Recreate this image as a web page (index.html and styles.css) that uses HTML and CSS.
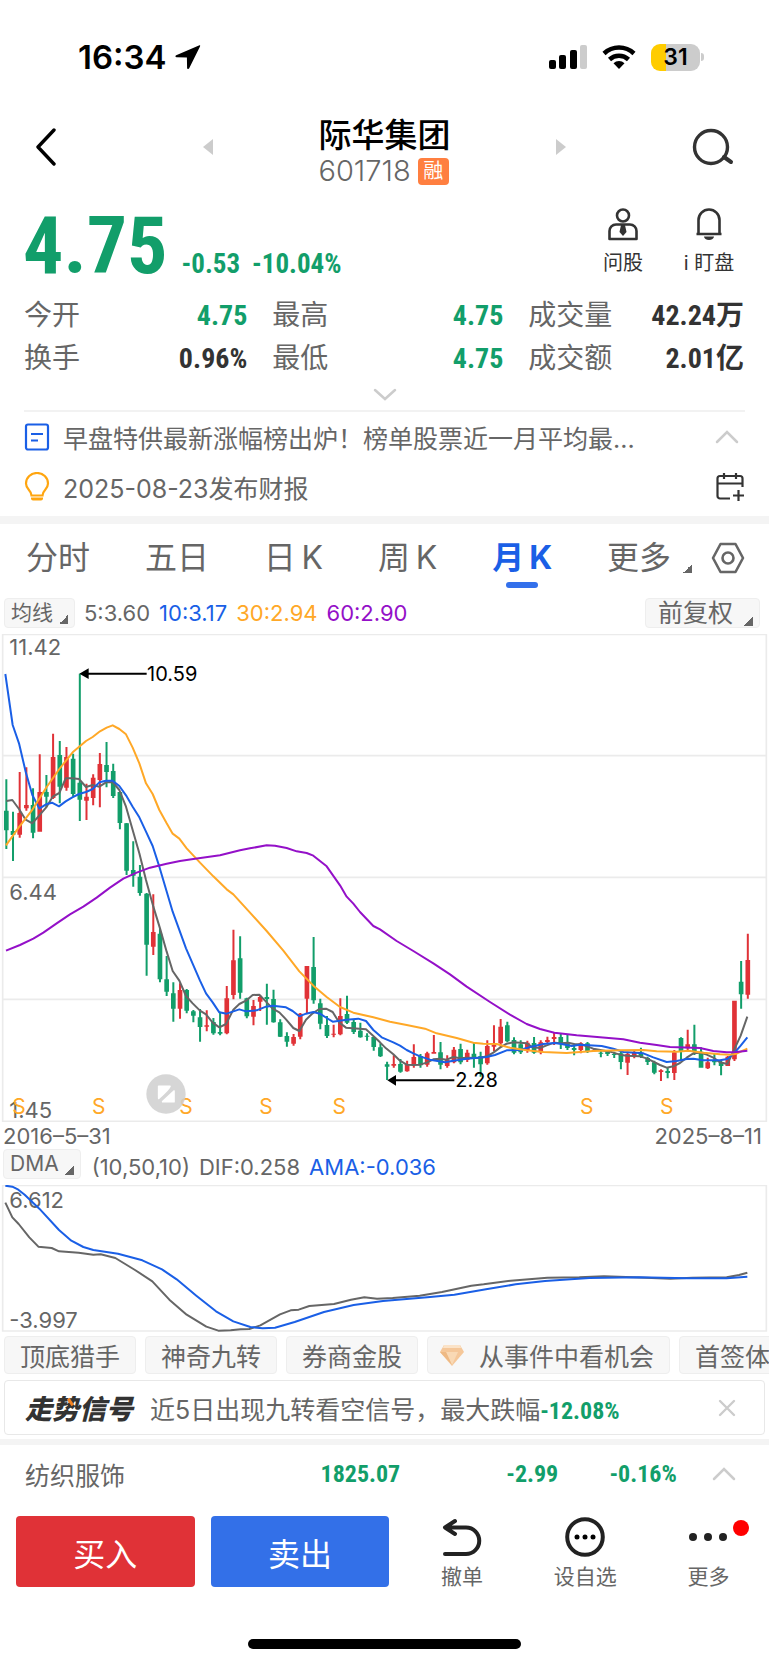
FILE: index.html
```html
<!DOCTYPE html>
<html lang="zh-CN">
<head>
  <meta charset="UTF-8" />
  <meta name="viewport" content="width=device-width, initial-scale=1" />
  <title>际华集团 601718</title>
  <link rel="stylesheet" href="styles.css">
</head>
<body>
  <!-- Status bar -->
  <div class="status-bar">
    <div class="status-left">
      <span class="clock">16:34</span>
      <svg width="26" height="26" viewBox="0 0 26 26"><path d="M24.5 1.2 1.2 11.2c-1.2.6-.9 2 .4 2.1l10.300.2.2 10.400c.1 1.300 1.600 1.500 2.100.3L25 2.500c.4-.9.1-1.600-.5-1.300z" fill="#000"/></svg>
    </div>
    <div class="status-right">
      <svg width="38" height="24" viewBox="0 0 38 24">
        <rect x="0" y="15" width="7" height="9" rx="2"/>
        <rect x="10" y="10" width="7" height="14" rx="2"/>
        <rect x="21" y="5" width="7" height="19" rx="2"/>
        <rect x="31" y="0" width="7" height="24" rx="2" fill="#ccc"/>
      </svg>
      <svg width="34" height="24" viewBox="0 0 34 24">
        <path d="M2 8.500a22 22 0 0 1 30 0M7.500 14.500a14 14 0 0 1 19 0" fill="none" stroke="#000" stroke-width="4.500"/>
        <path d="M17 24l-5.500-5.800a8 8 0 0 1 11 0z"/>
      </svg>
      <div class="battery"><span class="battery-level">31</span></div>
    </div>
  </div>

  <!-- Title bar -->
  <header class="header">
    <button class="icon-btn" aria-label="返回">
      <svg width="42" height="38" viewBox="0 0 42 38"><path d="M19 2 3 19l16 17" fill="none" stroke="#000" stroke-width="3.400" stroke-linecap="round" stroke-linejoin="round"/></svg>
    </button>
    <div class="stock-switch">
      <button class="icon-btn" aria-label="上一只">
        <svg width="10" height="18" viewBox="0 0 10 18"><path d="M10 1v16L0 9z" fill="#ccc"/></svg>
      </button>
      <div class="header-title">
        <h1>际华集团</h1>
        <div class="code">601718 <span class="badge">融</span></div>
      </div>
      <button class="icon-btn" aria-label="下一只">
        <svg width="10" height="18" viewBox="0 0 10 18"><path d="M0 1v16l10-8z" fill="#ccc"/></svg>
      </button>
    </div>
    <button class="icon-btn" aria-label="搜索">
      <svg width="42" height="38" viewBox="0 0 42 38"><circle cx="19" cy="19" r="16.500" fill="none" stroke="#333" stroke-width="3.400"/><path d="m32 29 7 5" stroke="#333" stroke-width="4" stroke-linecap="round"/></svg>
    </button>
  </header>

  <!-- Price -->
  <section class="price-row">
    <strong class="price">4.75</strong>
    <span class="change">-0.53</span>
    <span class="change">-10.04%</span>
    <div class="price-actions">
      <button class="tool-btn">
        <svg width="32" height="34" viewBox="0 0 32 34" fill="none" stroke="#333" stroke-width="2.600">
          <ellipse cx="16" cy="8.500" rx="6" ry="6"/>
          <path d="M9 17.500h14a6.500 6.500 0 0 1 6.500 6.500v8h-27v-8A6.500 6.500 0 0 1 9 17.500z" stroke-linejoin="round"/>
          <path d="m14 18-1.500 7 3.500 4 3.500-4-1.500-7z" fill="#333" stroke="none"/>
        </svg>
        问股
      </button>
      <button class="tool-btn">
        <svg width="32" height="34" viewBox="0 0 32 34">
          <path d="M5.500 27V13a10.500 10.500 0 0 1 21 0v14zM3.500 27h25" fill="none" stroke="#333" stroke-width="2.600"/>
          <path d="M11 29.500h10a5 3.500 0 0 1-10 0z" fill="#333"/>
        </svg>
        i 盯盘
      </button>
    </div>
  </section>

  <dl class="quotes">
    <div><dt>今开</dt><dd class="down">4.75</dd></div>
    <div><dt>最高</dt><dd class="down">4.75</dd></div>
    <div><dt>成交量</dt><dd>42.24万</dd></div>
    <div><dt>换手</dt><dd>0.96%</dd></div>
    <div><dt>最低</dt><dd class="down">4.75</dd></div>
    <div><dt>成交额</dt><dd>2.01亿</dd></div>
  </dl>
  <button class="expand" aria-label="展开">
    <svg width="24" height="14" viewBox="0 0 24 14"><path d="m2 2 10 9 10-9" fill="none" stroke="#ccc" stroke-width="2.500" stroke-linecap="round"/></svg>
  </button>

  <!-- News -->
  <section class="news">
    <div class="news-item">
      <svg width="26" height="28" viewBox="0 0 26 28"><rect x="2" y="1.500" width="22" height="25" rx="2" fill="none" stroke="#1a5fe6" stroke-width="2.200"/><path d="M7 11h12M7 17.500h7" stroke="#1a5fe6" stroke-width="2.200"/></svg>
      <a href="#">早盘特供最新涨幅榜出炉！榜单股票近一月平均最...</a>
      <svg width="24" height="14" viewBox="0 0 24 14"><path d="m2 12 10-10 10 10" fill="none" stroke="#ccc" stroke-width="2.500" stroke-linecap="round"/></svg>
    </div>
    <div class="news-item">
      <svg width="26" height="30" viewBox="0 0 26 30"><path d="M7.500 23.500C7.500 18 2 18 2 11.500a11 10.500 0 0 1 22 0c0 6.500-5.500 6.500-5.500 12z" fill="none" stroke="#ffa50f" stroke-width="2.200"/><path d="M7 25.500h12v1a2 2 0 0 1-2 2H9a2 2 0 0 1-2-2z" fill="#ffa50f"/></svg>
      <a href="#">2025-08-23发布财报</a>
      <svg width="30" height="30" viewBox="0 0 30 30" fill="none" stroke="#333" stroke-width="2.200"><path d="M15 26.500H5a2.500 2.500 0 0 1-2.500-2.500V6.500A2.500 2.500 0 0 1 5 4h20a2.500 2.500 0 0 1 2.500 2.500V15M2.500 11.500h25M9 1v6M21 1v6M18 23.500h11M23.500 18v11"/></svg>
    </div>
  </section>

  <!-- Period tabs -->
  <nav class="tabs">
    <a href="#">分时</a>
    <a href="#">五日</a>
    <a href="#">日&thinsp;K</a>
    <a href="#">周&thinsp;K</a>
    <a href="#" class="active">月&thinsp;K</a>
    <a href="#" class="more">更多<span class="corner"></span></a>
    <button class="icon-btn" aria-label="设置">
      <svg width="34" height="32" viewBox="0 0 34 32" fill="none" stroke="#666" stroke-width="2.600"><path d="M9.500 2h15L32 16l-7.500 14h-15L2 16z" stroke-linejoin="round"/><circle cx="17" cy="16" r="5.500"/></svg>
    </button>
  </nav>

  <!-- Monthly chart -->
  <section>
    <div class="legend">
      <button class="pill">均线<span class="corner"></span></button>
      <span>5:3.60</span>
      <span class="blue">10:3.17</span>
      <span class="orange">30:2.94</span>
      <span class="purple">60:2.90</span>
      <button class="pill pill-right">前复权<span class="corner"></span></button>
    </div>
    <svg class="chart" viewBox="0 0 2307 1464">
      <path class="grid" d="M8 1H2299V1462H8zM8 365H2299M8 730H2299M8 1096H2299"/>
      <g id="candles"></g>
      <g class="lines">
        <polyline class="ma5" points="19,501 37,498 57,525 77,557 97,568 118,544 138,521 158,488 178,477 197,433 217,433 237,435 258,459 278,453 298,458 318,445 338,444 358,468 378,518 398,588 418,658 438,738 460,818 480,883 500,953 518,1011 538,1040 558,1086 578,1108 600,1130 618,1141 638,1166 658,1180 678,1170 700,1127 718,1110 738,1100 758,1083 778,1082 798,1103 818,1124 838,1135 858,1156 880,1182 898,1191 918,1157 938,1138 958,1125 978,1124 998,1134 1018,1166 1038,1181 1058,1183 1098,1186 1120,1206 1140,1225 1158,1243 1180,1261 1200,1280 1220,1292 1240,1293 1260,1292 1280,1286 1300,1276 1320,1274 1340,1277 1360,1269 1380,1273 1400,1271 1440,1272 1460,1267 1480,1256 1500,1241 1520,1229 1540,1225 1580,1228 1598,1240 1620,1242 1640,1234 1663,1226 1683,1228 1705,1226 1725,1231 1743,1231 1780,1244 1830,1253 1860,1262 1880,1265 1920,1267 1940,1273 1960,1283 1980,1293 2000,1301 2020,1297 2040,1287 2060,1271 2080,1258 2100,1256 2120,1262 2140,1271 2160,1285 2182,1290 2202,1248 2222,1205 2242,1148"/>
        <polyline class="ma10" points="16,120 38,273 57,328 77,413 97,483 118,524 138,511 156,506 177,517 197,502 217,490 237,480 258,474 278,465 298,445 318,440 338,440 358,456 378,484 398,518 418,550 438,593 458,636 478,698 518,833 558,943 600,1040 618,1078 638,1105 658,1135 680,1139 718,1126 738,1132 770,1129 798,1118 818,1115 858,1120 878,1131 898,1147 918,1139 940,1134 960,1139 980,1152 998,1163 1040,1157 1075,1154 1098,1161 1120,1188 1145,1210 1180,1225 1200,1235 1220,1248 1240,1258 1260,1267 1290,1277 1335,1285 1360,1280 1400,1274 1460,1269 1485,1263 1520,1249 1560,1248 1590,1239 1630,1230 1663,1227 1685,1230 1715,1236 1740,1232 1805,1236 1840,1244 1870,1254 1930,1258 1960,1270 2000,1284 2030,1281 2060,1275 2080,1274 2110,1279 2160,1279 2182,1275 2202,1258 2222,1235 2242,1210"/>
        <polyline class="ma30" points="18,634 58,578 98,526 138,462 178,405 218,355 258,321 278,309 300,292 320,281 338,274 358,285 378,301 398,341 418,388 438,448 458,480 478,528 500,568 518,599 538,614 560,643 600,686 640,727 680,766 700,781 750,836 800,891 850,950 898,1012 940,1055 980,1089 1020,1119 1060,1136 1120,1150 1170,1163 1220,1173 1275,1184 1310,1198 1370,1212 1420,1226 1450,1229 1490,1230 1530,1241 1580,1249 1630,1254 1700,1257 1780,1251 1860,1249 1930,1248 1970,1252 2030,1253 2065,1250 2110,1256 2160,1261 2190,1262 2210,1259 2230,1249 2242,1244"/>
        <polyline class="ma60" points="18,950 60,933 100,914 130,896 170,868 210,841 250,818 290,791 330,761 370,734 410,716 450,701 500,689 540,681 580,675 660,664 720,649 750,643 800,634 825,635 860,642 890,652 920,657 940,665 980,697 1020,754 1040,788 1060,809 1080,834 1120,876 1140,886 1190,921 1240,951 1300,988 1350,1021 1400,1058 1470,1104 1530,1142 1580,1170 1620,1185 1663,1196 1730,1204 1800,1210 1870,1216 1920,1226 1970,1233 2010,1239 2100,1242 2140,1251 2180,1255 2210,1254 2242,1250"/>
      </g>
      <g class="marks">
        <path d="M440 119H262M1363 1339H1185"/>
        <path class="tip" d="M238 119l28-16v32zM1162 1339l26-16v32z"/>
        <text x="441" y="140">10.59</text>
        <text x="1366" y="1360">2.28</text>
      </g>
      <g class="axis">
        <text x="28" y="64">11.42</text>
        <text x="28" y="797">6.44</text>
        <text x="28" y="1451">1.45</text>
      </g>
      <g class="signals">
        <text x="57" y="1440">S</text>
        <text x="296" y="1440">S</text>
        <text x="558" y="1440">S</text>
        <text x="798" y="1440">S</text>
        <text x="1018" y="1440">S</text>
        <text x="1760" y="1440">S</text>
        <text x="2000" y="1440">S</text>
      </g>
      <g>
        <circle cx="498" cy="1380" r="59" fill="#cfcfcf" fill-opacity=".85"/>
        <path d="M476 1357h34q-2 8-34 36zM522 1371v32h-34z" fill="#fff" stroke="#fff" stroke-width="5" stroke-linejoin="round"/>
      </g>
    </svg>
    <div class="dates"><span>2016–5–31</span><span>2025–8–11</span></div>
  </section>

  <!-- DMA chart -->
  <section>
    <div class="legend legend-dma">
      <button class="pill">DMA<span class="corner"></span></button>
      <span>(10,50,10)</span>
      <span>DIF:0.258</span>
      <span class="blue">AMA:-0.036</span>
    </div>
    <svg class="chart" viewBox="0 0 2307 441">
      <path class="grid" d="M8 1H2299V438H8z"/>
      <g class="axis">
        <text x="28" y="68">6.612</text>
        <text x="28" y="428">-3.997</text>
      </g>
      <g class="lines">
        <polyline class="ma5" points="16,53 37,97 56,117 88,157 115,185 155,189 177,199 236,203 280,209 302,208 346,219 405,255 457,289 508,344 560,389 619,425 655,437 692,436 722,433 748,432 781,421 840,388 872,376 896,374 928,363 1002,357 1053,344 1093,337 1131,341 1178,339 1259,332 1326,321 1414,302 1451,298 1532,287 1642,278 1738,277 1812,274 1900,277 2011,281 2077,278 2180,277 2217,270 2242,263"/>
        <polyline class="ma10" points="16,2 37,5 55,14 74,29 118,71 177,135 214,167 250,186 280,195 354,206 427,226 486,253 530,283 589,332 648,379 700,409 751,426 788,430 825,428 884,411 972,381 1061,360 1149,348 1282,337 1363,329 1458,313 1547,298 1635,288 1768,279 1915,277 2062,280 2180,280 2242,275"/>
      </g>
    </svg>
  </section>

  <div class="chips">
    <button class="chip">顶底猎手</button>
    <button class="chip">神奇九转</button>
    <button class="chip">券商金股</button>
    <button class="chip chip-gem">
      <svg width="24" height="21" viewBox="0 0 24 21"><path d="M4 0h16l4 7-12 14L0 7z" fill="#f5c799"/><path d="M4 0h16l1 3H3z" fill="#fbe3c8"/><path d="M6 7h12l-6 13z" fill="#f9d9b5"/><path d="M0 7h6l6 13z" fill="#eeb984"/></svg>
      从事件中看机会
    </button>
    <button class="chip">首签体验</button>
  </div>

  <div class="signal-card">
    <span class="signal-logo">走势信号</span>
    <p>近5日出现九转看空信号，最大跌幅<strong>-12.08%</strong></p>
    <button class="icon-btn" aria-label="关闭">
      <svg width="18" height="18" viewBox="0 0 18 18"><path d="m2 2 14 14M16 2 2 16" stroke="#ccc" stroke-width="2.400" stroke-linecap="round"/></svg>
    </button>
  </div>

  <div class="industry">
    <span class="industry-name">纺织服饰</span>
    <span class="num">1825.07</span>
    <span class="num">-2.99</span>
    <span class="num">-0.16%</span>
    <svg width="24" height="14" viewBox="0 0 24 14"><path d="m2 12 10-10 10 10" fill="none" stroke="#ccc" stroke-width="2.500" stroke-linecap="round"/></svg>
  </div>

  <!-- Bottom bar -->
  <footer class="bottom-bar">
    <button class="trade buy">买入</button>
    <button class="trade sell">卖出</button>
    <button class="bottom-btn">
      <svg width="40" height="42" viewBox="0 0 40 42" fill="none" stroke="#222" stroke-width="4" stroke-linecap="round" stroke-linejoin="round"><path d="M13 5 3 11.500 13 18M3 11.500h21a13 13 0 0 1 0 26.500H3"/></svg>
      撤单
    </button>
    <button class="bottom-btn">
      <svg width="42" height="42" viewBox="0 0 42 42"><circle cx="21" cy="21" r="17.800" fill="none" stroke="#222" stroke-width="4"/><circle cx="13" cy="21" r="2.500"/><circle cx="21" cy="21" r="2.500"/><circle cx="29" cy="21" r="2.500"/></svg>
      设自选
    </button>
    <button class="bottom-btn">
      <svg width="42" height="42" viewBox="0 0 42 42" fill="#222"><circle cx="6" cy="21" r="4"/><circle cx="21" cy="21" r="4"/><circle cx="36" cy="21" r="4"/></svg>
      更多
      <span class="dot"></span>
    </button>
  </footer>
  <div class="home-bar"></div>

  <script src="script.js"></script>
</body>
</html>
```
FILE: styles.css
```css
/* --- Basic Reset --- */
* {
  margin: 0;
  padding: 0;
  box-sizing: border-box;
}

body {
  background-color: #fff;
  color: #666;
  font-family: Inter, "Noto Sans CJK SC", sans-serif;
  overflow-x: hidden;
}

button {
  background: none;
  border: none;
  color: inherit;
  font: inherit;
  cursor: pointer;
}

a {
  color: inherit;
  text-decoration: none;
}

svg {
  display: block;
  flex-shrink: 0;
}

/* --- Status bar --- */
.status-bar {
  display: flex;
  justify-content: space-between;
  align-items: center;
  height: 114px;
  padding: 0 65px 0 78px;
  color: #000;
}

.status-left,
.status-right {
  display: flex;
  align-items: center;
}

.status-left {
  gap: 8px;
}

.status-right {
  gap: 15px;
}

.clock {
  font-size: 33px;
  font-weight: 600;
}

.battery {
  display: flex;
  align-items: center;
}

.battery::after {
  content: "";
  width: 3px;
  height: 8px;
  margin-left: 1px;
  border-radius: 0 3px 3px 0;
  background-color: #ccc;
}

.battery-level {
  width: 49px;
  border-radius: 9px;
  background: linear-gradient(to right, #ffcc00 31%, #ccc 31%);
  font-size: 23px;
  font-weight: 600;
  line-height: 27px;
  text-align: center;
}

/* --- Header --- */
.header {
  display: flex;
  justify-content: space-between;
  align-items: center;
  height: 76px;
  padding: 0 35px;
}

.stock-switch {
  display: flex;
  justify-content: space-between;
  align-items: center;
  width: 52%;
}

.header .icon-btn {
  margin-bottom: 10px;
}

.header-title {
  text-align: center;
}

.header h1 {
  color: #000;
  font-size: 33px;
  font-weight: 500;
  line-height: 38px;
}

.code {
  display: flex;
  align-items: center;
  gap: 7px;
  font-size: 29px;
  font-weight: 300;
  line-height: 34px;
}

.badge {
  width: 31px;
  border-radius: 4px;
  background-color: #ff7f40;
  color: #fff;
  font-size: 20px;
  font-weight: 400;
  line-height: 27px;
  text-align: center;
}

/* --- Price --- */
.price-row {
  display: flex;
  align-items: baseline;
  gap: 12px;
  height: 100px;
  padding: 0 30px 0 23px;
  color: #129e6a;
}

.price,
.change,
.quotes dd,
.num,
.signal-card strong {
  font-family: "Roboto Condensed", "Liberation Sans Narrow", "Noto Sans CJK SC", sans-serif;
  font-weight: 700;
}

.price {
  margin-right: 2px;
  font-size: 80px;
  line-height: 112px;
}

.change {
  font-size: 27px;
}

.price-actions {
  display: flex;
  align-self: flex-start;
  gap: 26px;
  margin-left: auto;
  padding-top: 17px;
  color: #333;
}

.tool-btn {
  display: flex;
  flex-direction: column;
  align-items: center;
  gap: 6px;
  min-width: 60px;
  font-size: 20px;
  line-height: 32px;
}

/* --- Quotes --- */
.quotes {
  display: grid;
  grid-template-columns: 29fr 30fr 28fr;
  column-gap: 25px;
  padding: 4px 25px 0 24px;
}

.quotes div {
  display: flex;
  justify-content: space-between;
  font-size: 28px;
  line-height: 43px;
}

.quotes dd {
  color: #333;
}

.quotes .down {
  color: #129e6a;
}

.expand {
  display: block;
  margin: 0 auto;
  padding: 8px 0;
}

/* --- News --- */
.news {
  margin: 0 24px;
  border-top: 2px solid #f2f2f2;
  padding-bottom: 4px;
}

.news-item {
  display: flex;
  align-items: center;
  gap: 13px;
  height: 50px;
  font-size: 25px;
}

.news-item a {
  flex: 1;
  white-space: nowrap;
}

.news-item:first-child svg:last-child {
  margin-right: 6px;
}

/* --- Tabs --- */
.tabs {
  display: flex;
  justify-content: space-between;
  align-items: center;
  height: 82px;
  padding: 0 24px 6px 26px;
  border-top: 8px solid #f4f4f4;
  font-size: 32px;
}

.tabs a {
  position: relative;
  line-height: 44px;
}

.tabs .active {
  color: #1a5fe6;
  font-weight: 700;
}

.tabs .active::after {
  content: "";
  position: absolute;
  left: 50%;
  bottom: -8px;
  width: 32px;
  height: 6px;
  margin-left: -16px;
  border-radius: 3px;
  background-color: #3370eb;
}

.corner {
  display: inline-block;
  width: 9px;
  height: 9px;
  margin-left: 6px;
  background: linear-gradient(135deg, transparent 50%, #666 50%);
  vertical-align: -4px;
}

.tabs .corner {
  margin-left: 12px;
}

.tabs .more {
  margin-right: -36px;
}

/* --- Charts --- */
.legend {
  display: flex;
  align-items: center;
  gap: 9px;
  height: 36px;
  padding: 0 9px 6px 4px;
  font-size: 22px;
}

.pill {
  height: 30px;
  padding: 0 6px;
  border: 1px solid #eee;
  border-radius: 4px;
  background-color: #f7f7f7;
  font-size: 21px;
  line-height: 28px;
}

.pill-right {
  margin-left: auto;
  padding: 0 6px 0 12px;
  font-size: 25px;
}

.pill-right .corner {
  margin-left: 11px;
}

.legend-dma {
  align-items: flex-start;
  padding-left: 3px;
  line-height: 36px;
}

.legend-dma .pill {
  margin-right: 2px;
}

.blue {
  color: #1a5fe6;
}

.orange {
  color: #ffa827;
}

.purple {
  color: #9410c8;
}

.chart {
  width: 100%;
  height: auto;
}

.grid {
  fill: none;
  stroke: #ebebeb;
  stroke-width: 5;
}

.lines polyline {
  fill: none;
  stroke-width: 6;
  stroke-linejoin: round;
}

.lines .ma5 {
  stroke: #666;
}

.lines .ma10 {
  stroke: #1a5fe6;
}

.lines .ma30 {
  stroke: #ffa827;
}

.lines .ma60 {
  stroke: #9410c8;
}

.candle-up {
  fill: #e03237;
}

.candle-down {
  fill: #129e6a;
}

.axis text {
  fill: #666;
  font-size: 66px;
}

.marks path {
  stroke: #000;
  stroke-width: 6;
}

.marks .tip {
  stroke: none;
}

.marks text {
  font-size: 60px;
  fill: #000;
}

.signals text {
  fill: #ffa827;
  font-size: 63px;
  text-anchor: middle;
}

.dates {
  display: flex;
  justify-content: space-between;
  padding: 1px 7px 0 3px;
  font-size: 22px;
  line-height: 26px;
}

/* --- Strategy chips --- */
.chips {
  display: flex;
  gap: 9px;
  padding: 4px 0 6px 4px;
  overflow: hidden;
}

.chip {
  display: flex;
  flex-shrink: 0;
  align-items: center;
  height: 38px;
  padding: 0 15px;
  border: 1px solid #eee;
  border-radius: 4px;
  background-color: #f7f7f7;
  font-size: 25px;
  white-space: nowrap;
}

.chip-gem {
  gap: 15px;
  padding-left: 12px;
}

/* --- Signal card --- */
.signal-card {
  display: flex;
  align-items: center;
  height: 55px;
  margin: 0 4px 4px;
  padding: 0 28px 0 20px;
  border: 1px solid #e8e8e8;
  border-radius: 4px;
}

.signal-logo {
  position: relative;
  margin-right: 17px;
  color: #333;
  font-size: 27px;
  font-style: italic;
  font-weight: 900;
}

/* orange stroke on the logo */
.signal-logo::after {
  content: "";
  position: absolute;
  top: 10px;
  left: 44px;
  width: 3px;
  height: 8px;
  background-color: #f58220;
  transform: rotate(-35deg);
}

.signal-card p {
  flex: 1;
  font-size: 25px;
  white-space: nowrap;
}

.signal-card strong,
.num {
  color: #129e6a;
  font-size: 24px;
}

/* --- Industry index --- */
.industry {
  display: grid;
  grid-template-columns: 10fr 9fr 8fr 6fr 3fr;
  align-items: center;
  height: 68px;
  padding: 0 33px 4px 25px;
  border-top: 6px solid #f4f4f4;
  font-size: 25px;
}

.industry .num {
  text-align: right;
}

.industry svg {
  justify-self: end;
}

/* --- Bottom bar --- */
.bottom-bar {
  display: grid;
  grid-template-columns: 5fr 5fr 3fr 3fr 3fr;
  column-gap: 16px;
  padding: 9px 10px 47px 16px;
}

.trade {
  height: 71px;
  border-radius: 4px;
  color: #fff;
  font-size: 32px;
}

.buy {
  background-color: #e03237;
}

.sell {
  background-color: #3370e8;
}

.bottom-btn {
  position: relative;
  display: flex;
  flex-direction: column;
  align-items: center;
  gap: 4px;
  padding-left: 6px;
  font-size: 21px;
  line-height: 30px;
}

.dot {
  position: absolute;
  top: 4px;
  right: 10px;
  width: 16px;
  height: 16px;
  border-radius: 50%;
  background-color: #f00;
}

.home-bar {
  width: 273px;
  height: 10px;
  margin: 0 auto 16px;
  border-radius: 5px;
  background-color: #000;
}
```
FILE: script.js
```js
// Monthly candles, top to bottom in chart units: [up, high, bodyTop, bodyBottom, low]
const candles = [
  [0, 436, 530, 589, 645], [0, 533, 591, 603, 681], [1, 414, 537, 602, 611], [1, 400, 513, 523, 530],
  [0, 463, 513, 596, 613], [1, 361, 474, 593, 593], [0, 423, 474, 488, 520], [1, 299, 369, 492, 495],
  [0, 321, 363, 458, 508], [1, 339, 369, 461, 470], [0, 359, 374, 480, 488], [0, 119, 446, 497, 561],
  [1, 449, 488, 500, 558], [1, 421, 431, 492, 514], [1, 357, 390, 438, 520], [0, 324, 393, 414, 460],
  [0, 389, 411, 486, 492], [0, 474, 474, 567, 586], [0, 567, 568, 710, 723], [0, 622, 708, 725, 758],
  [0, 693, 728, 777, 785], [0, 777, 779, 932, 1025], [1, 781, 894, 938, 963], [0, 883, 899, 1036, 1045],
  [0, 966, 1036, 1073, 1086], [0, 1045, 1078, 1124, 1163], [1, 1048, 1068, 1124, 1154], [0, 1065, 1068, 1130, 1138],
  [0, 1128, 1132, 1145, 1165], [0, 1125, 1150, 1179, 1223], [1, 1129, 1174, 1178, 1192], [0, 1152, 1164, 1198, 1202],
  [0, 1133, 1194, 1199, 1204], [1, 1056, 1093, 1198, 1201], [1, 887, 979, 1083, 1096], [0, 907, 973, 1076, 1094],
  [0, 1091, 1093, 1147, 1153], [1, 1098, 1116, 1148, 1174], [1, 1083, 1089, 1103, 1131], [0, 1049, 1089, 1095, 1172],
  [0, 1067, 1095, 1165, 1166], [0, 1156, 1165, 1208, 1209], [0, 1195, 1206, 1223, 1238], [1, 1200, 1209, 1229, 1235],
  [1, 1137, 1139, 1208, 1216], [1, 996, 996, 1094, 1138], [0, 909, 999, 1099, 1109], [0, 1094, 1108, 1169, 1186],
  [0, 1146, 1173, 1206, 1212], [1, 1172, 1199, 1202, 1210], [1, 1093, 1146, 1201, 1204], [0, 1085, 1140, 1166, 1170],
  [0, 1158, 1164, 1194, 1200], [0, 1166, 1190, 1210, 1211], [0, 1198, 1205, 1208, 1220], [0, 1208, 1209, 1239, 1250],
  [0, 1228, 1240, 1267, 1269], [0, 1283, 1291, 1298, 1338], [1, 1264, 1290, 1295, 1301], [0, 1275, 1290, 1313, 1316],
  [1, 1280, 1290, 1312, 1313], [1, 1231, 1269, 1294, 1301], [0, 1260, 1266, 1294, 1301], [1, 1253, 1258, 1292, 1298],
  [1, 1203, 1254, 1259, 1259], [0, 1224, 1255, 1292, 1306], [1, 1264, 1278, 1296, 1301], [1, 1239, 1247, 1285, 1288],
  [0, 1229, 1245, 1285, 1291], [1, 1247, 1256, 1278, 1284], [0, 1224, 1259, 1272, 1301], [0, 1253, 1266, 1291, 1328],
  [1, 1219, 1236, 1288, 1292], [1, 1174, 1233, 1238, 1251], [1, 1155, 1178, 1228, 1238], [0, 1163, 1174, 1222, 1225],
  [0, 1210, 1218, 1256, 1261], [0, 1219, 1231, 1255, 1260], [1, 1220, 1226, 1250, 1256], [0, 1209, 1227, 1256, 1259],
  [1, 1219, 1225, 1255, 1261], [1, 1208, 1218, 1224, 1230], [1, 1196, 1209, 1215, 1233], [0, 1198, 1209, 1230, 1245],
  [0, 1202, 1228, 1242, 1248], [0, 1232, 1242, 1248, 1264], [1, 1225, 1228, 1248, 1258], [0, 1224, 1228, 1251, 1257],
  [1, 1244, 1247, 1251, 1253], [0, 1250, 1256, 1259, 1270], [0, 1248, 1254, 1260, 1266], [0, 1253, 1260, 1263, 1272],
  [0, 1253, 1258, 1284, 1306], [1, 1256, 1260, 1286, 1323], [1, 1251, 1256, 1267, 1273], [0, 1241, 1256, 1268, 1272],
  [0, 1268, 1272, 1284, 1293], [0, 1280, 1285, 1316, 1321], [1, 1306, 1309, 1314, 1341], [0, 1301, 1311, 1317, 1333],
  [1, 1248, 1255, 1317, 1338], [0, 1210, 1212, 1253, 1278], [1, 1187, 1231, 1243, 1248], [0, 1172, 1231, 1251, 1263],
  [0, 1240, 1253, 1301, 1301], [1, 1271, 1285, 1303, 1305], [0, 1260, 1278, 1285, 1294], [0, 1281, 1286, 1296, 1324],
  [1, 1266, 1268, 1296, 1296], [1, 1100, 1100, 1276, 1281], [0, 981, 1043, 1081, 1124], [1, 899, 978, 1082, 1094],
];

const group = document.getElementById('candles');
const step = 20.04;

candles.forEach(([up, high, top, bottom, low], i) => {
  const x = 19 + i * step;
  const path = document.createElementNS('http://www.w3.org/2000/svg', 'path');
  path.setAttribute('class', up ? 'candle-up' : 'candle-down');
  path.setAttribute(
    'd',
    `M${x - 3} ${high}h6V${low}h-6zM${x - 7} ${top}h14V${bottom}h-14z`
  );
  group.appendChild(path);
});
```
